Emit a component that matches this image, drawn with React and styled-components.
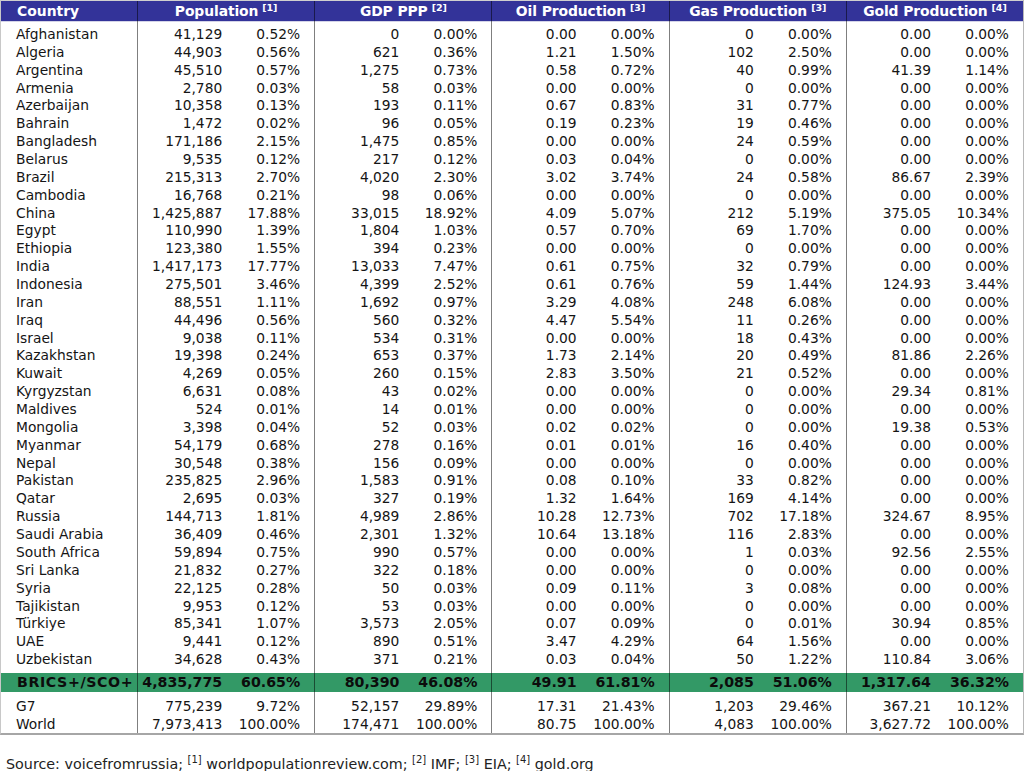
import React from 'react'
import styled, { createGlobalStyle } from 'styled-components'

const GlobalStyle = createGlobalStyle`
  html, body {
    margin: 0;
    padding: 0;
    background: #fff;
  }
  body {
    font-family: "DejaVu Sans", Verdana, sans-serif;
    color: #111;
  }
`

const heads = [
  ['Population', 1],
  ['GDP PPP', 2],
  ['Oil Production', 3],
  ['Gas Production', 3],
  ['Gold Production', 4],
]

const raw = `Afghanistan|41,129 0.52% 0 0.00% 0.00 0.00% 0 0.00% 0.00 0.00%
Algeria|44,903 0.56% 621 0.36% 1.21 1.50% 102 2.50% 0.00 0.00%
Argentina|45,510 0.57% 1,275 0.73% 0.58 0.72% 40 0.99% 41.39 1.14%
Armenia|2,780 0.03% 58 0.03% 0.00 0.00% 0 0.00% 0.00 0.00%
Azerbaijan|10,358 0.13% 193 0.11% 0.67 0.83% 31 0.77% 0.00 0.00%
Bahrain|1,472 0.02% 96 0.05% 0.19 0.23% 19 0.46% 0.00 0.00%
Bangladesh|171,186 2.15% 1,475 0.85% 0.00 0.00% 24 0.59% 0.00 0.00%
Belarus|9,535 0.12% 217 0.12% 0.03 0.04% 0 0.00% 0.00 0.00%
Brazil|215,313 2.70% 4,020 2.30% 3.02 3.74% 24 0.58% 86.67 2.39%
Cambodia|16,768 0.21% 98 0.06% 0.00 0.00% 0 0.00% 0.00 0.00%
China|1,425,887 17.88% 33,015 18.92% 4.09 5.07% 212 5.19% 375.05 10.34%
Egypt|110,990 1.39% 1,804 1.03% 0.57 0.70% 69 1.70% 0.00 0.00%
Ethiopia|123,380 1.55% 394 0.23% 0.00 0.00% 0 0.00% 0.00 0.00%
India|1,417,173 17.77% 13,033 7.47% 0.61 0.75% 32 0.79% 0.00 0.00%
Indonesia|275,501 3.46% 4,399 2.52% 0.61 0.76% 59 1.44% 124.93 3.44%
Iran|88,551 1.11% 1,692 0.97% 3.29 4.08% 248 6.08% 0.00 0.00%
Iraq|44,496 0.56% 560 0.32% 4.47 5.54% 11 0.26% 0.00 0.00%
Israel|9,038 0.11% 534 0.31% 0.00 0.00% 18 0.43% 0.00 0.00%
Kazakhstan|19,398 0.24% 653 0.37% 1.73 2.14% 20 0.49% 81.86 2.26%
Kuwait|4,269 0.05% 260 0.15% 2.83 3.50% 21 0.52% 0.00 0.00%
Kyrgyzstan|6,631 0.08% 43 0.02% 0.00 0.00% 0 0.00% 29.34 0.81%
Maldives|524 0.01% 14 0.01% 0.00 0.00% 0 0.00% 0.00 0.00%
Mongolia|3,398 0.04% 52 0.03% 0.02 0.02% 0 0.00% 19.38 0.53%
Myanmar|54,179 0.68% 278 0.16% 0.01 0.01% 16 0.40% 0.00 0.00%
Nepal|30,548 0.38% 156 0.09% 0.00 0.00% 0 0.00% 0.00 0.00%
Pakistan|235,825 2.96% 1,583 0.91% 0.08 0.10% 33 0.82% 0.00 0.00%
Qatar|2,695 0.03% 327 0.19% 1.32 1.64% 169 4.14% 0.00 0.00%
Russia|144,713 1.81% 4,989 2.86% 10.28 12.73% 702 17.18% 324.67 8.95%
Saudi Arabia|36,409 0.46% 2,301 1.32% 10.64 13.18% 116 2.83% 0.00 0.00%
South Africa|59,894 0.75% 990 0.57% 0.00 0.00% 1 0.03% 92.56 2.55%
Sri Lanka|21,832 0.27% 322 0.18% 0.00 0.00% 0 0.00% 0.00 0.00%
Syria|22,125 0.28% 50 0.03% 0.09 0.11% 3 0.08% 0.00 0.00%
Tajikistan|9,953 0.12% 53 0.03% 0.00 0.00% 0 0.00% 0.00 0.00%
Türkiye|85,341 1.07% 3,573 2.05% 0.07 0.09% 0 0.01% 30.94 0.85%
UAE|9,441 0.12% 890 0.51% 3.47 4.29% 64 1.56% 0.00 0.00%
Uzbekistan|34,628 0.43% 371 0.21% 0.03 0.04% 50 1.22% 110.84 3.06%`

const parse = (line) => {
  const [name, rest] = line.split('|')
  const v = rest.split(' ')
  const pairs = []
  for (let i = 0; i < v.length; i += 2) pairs.push([v[i], v[i + 1]])
  return { name, pairs }
}

const countries = raw.split('\n').map(parse)
const brics = parse('BRICS+/SCO+|4,835,775 60.65% 80,390 46.08% 49.91 61.81% 2,085 51.06% 1,317.64 36.32%')
const summary = [
  parse('G7|775,239 9.72% 52,157 29.89% 17.31 21.43% 1,203 29.46% 367.21 10.12%'),
  parse('World|7,973,413 100.00% 174,471 100.00% 80.75 100.00% 4,083 100.00% 3,627.72 100.00%'),
]

const tones = {
  head: { bg: '#333399', color: '#fff', size: '13.9px', weight: 700 },
  body: { bg: '#fff', color: '#151515', size: '13.8px', weight: 400 },
  total: { bg: '#339966', color: '#0c0c0c', size: '14.2px', weight: 700 },
}

const Page = styled.div`
  width: 1024px;
`

const Table = styled.div`
  box-sizing: border-box;
  width: 1024px;
  border-left: 1px solid #c8c8c8;
  border-right: 1px solid #b8b8b8;
  border-bottom: 2px solid #a6a6a6;
`

const Row = styled.div`
  display: grid;
  grid-template-columns: 136px repeat(5, 1fr);
  height: ${({ $h }) => $h};
  background: ${({ $tone }) => tones[$tone].bg};
  color: ${({ $tone }) => tones[$tone].color};
  font-size: ${({ $tone }) => tones[$tone].size};
  font-weight: ${({ $tone }) => tones[$tone].weight};
  line-height: ${({ $h }) => $h};
  white-space: nowrap;

  &.head {
    border-top: 1px solid #cfcfcf;
    border-bottom: 1px solid #d4d4e8;
    line-height: 21px;
  }
`

const Name = styled.div`
  padding-left: ${({ $pad }) => $pad || '15px'};
  letter-spacing: ${({ $wide }) => ($wide ? '0.6px' : '0')};
`

const Group = styled.div`
  border-left: 1px solid rgba(0, 0, 0, 0.5);
  display: grid;
  grid-template-columns: 1fr 78px;
  padding-right: 14px;
`

const Num = styled.span`
  text-align: right;
`

const HeadTitle = styled.div`
  border-left: 1px solid rgba(0, 0, 0, 0.5);
  text-align: center;
  letter-spacing: -0.1px;
`

const Sup = styled.sup`
  font-size: ${({ $light }) => ($light ? '10px' : '9.5px')};
  font-weight: ${({ $light }) => ($light ? 400 : 700)};
  line-height: 0;
  vertical-align: ${({ $light }) => ($light ? '6px' : '5px')};
  margin-left: ${({ $light }) => ($light ? '0' : '4px')};
`

const Source = styled.p`
  margin: 20px 0 0 6px;
  font-size: 14.3px;
  line-height: 18px;
  color: #222;
`

const Spacer = ({ h }) => (
  <Row $tone="body" $h={h}>
    <Name />
    {heads.map((_, i) => (
      <Group key={i} />
    ))}
  </Row>
)

const DataRow = ({ item, tone, h }) => (
  <Row $tone={tone} $h={h}>
    <Name $wide={tone === 'total'} $pad={tone === 'total' ? '16px' : undefined}>
      {item.name}
    </Name>
    {item.pairs.map(([a, b], i) => (
      <Group key={i}>
        <Num>{a}</Num>
        <Num>{b}</Num>
      </Group>
    ))}
  </Row>
)

export default function App() {
  return (
    <Page>
      <GlobalStyle />
      <Table>
        <Row $tone="head" $h="20px" className="head">
          <Name $pad="16px">Country</Name>
          {heads.map(([title, ref]) => (
            <HeadTitle key={title}>
              {title}
              <Sup>[{ref}]</Sup>
            </HeadTitle>
          ))}
        </Row>
        <Spacer h="4px" />
        {countries.map((c) => (
          <DataRow key={c.name} item={c} tone="body" h="17.86px" />
        ))}
        <Spacer h="4px" />
        <DataRow item={brics} tone="total" h="19px" />
        <Spacer h="5px" />
        {summary.map((c) => (
          <DataRow key={c.name} item={c} tone="body" h="18px" />
        ))}
      </Table>
      <Source>
        Source: voicefromrussia; <Sup $light>[1]</Sup> worldpopulationreview.com; <Sup $light>[2]</Sup> IMF;{' '}
        <Sup $light>[3]</Sup> EIA; <Sup $light>[4]</Sup> gold.org
      </Source>
    </Page>
  )
}
